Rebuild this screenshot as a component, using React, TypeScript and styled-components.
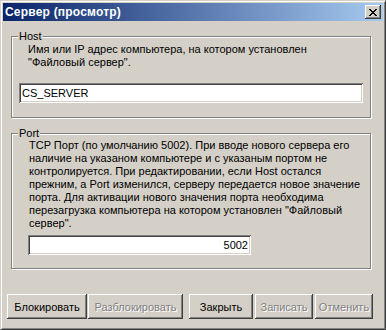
import React from "react";
import styled, { createGlobalStyle } from "styled-components";

const GlobalStyle = createGlobalStyle`
  html, body {
    margin: 0;
    padding: 0;
    background: #d4d0c8;
  }
  body {
    font-family: "Liberation Sans", Arial, sans-serif;
    font-size: 11px;
    color: #000000;
  }
`;

const Window = styled.div`
  width: 386px;
  height: 330px;
  box-sizing: border-box;
  padding: 2px;
  background: #d4d0c8;
  border: 1px solid;
  border-color: #d4d0c8 #404040 #404040 #d4d0c8;
  box-shadow: inset 1px 1px 0 #ffffff, inset -1px -1px 0 #808080;
  display: flex;
  flex-direction: column;
`;

const TitleBar = styled.div`
  height: 18px;
  display: flex;
  align-items: center;
  justify-content: space-between;
  padding: 0 2px 0 2px;
  background: linear-gradient(to right, #0a246a, #a6caf0);
`;

const Caption = styled.span`
  color: #ffffff;
  font-weight: bold;
  font-size: 12px;
  line-height: 14px;
  letter-spacing: 0.2px;
`;

const CloseButton = styled.div`
  width: 16px;
  height: 14px;
  box-sizing: border-box;
  background: #d4d0c8;
  display: flex;
  align-items: center;
  justify-content: center;
  box-shadow: inset -1px -1px 0 #404040, inset 1px 1px 0 #ffffff,
    inset -2px -2px 0 #808080, inset 2px 2px 0 #d4d0c8;
`;

const Body = styled.div`
  display: flex;
  flex-direction: column;
  padding: 15px 0 0 8px;
`;

const Group = styled.div<{ $top: number; $padTop: number; $padBottom: number }>`
  position: relative;
  width: 360px;
  box-sizing: border-box;
  margin-top: ${(p) => p.$top}px;
  padding: ${(p) => p.$padTop}px 0 ${(p) => p.$padBottom}px 0;
  border: 1px solid #808080;
  box-shadow: inset 1px 1px 0 #ffffff, 1px 1px 0 #ffffff;
  display: flex;
  flex-direction: column;
  align-items: flex-start;
`;

const Legend = styled.span`
  position: absolute;
  top: -7px;
  left: 6px;
  padding: 0 1px;
  line-height: 13px;
  background: #d4d0c8;
`;

const Note = styled.div<{ $indent: number }>`
  margin-left: ${(p) => p.$indent}px;
  line-height: 13px;
  white-space: nowrap;
`;

const Edit = styled.div<{ $indent: number; $gap: number; $width: number; $right?: boolean }>`
  margin-left: ${(p) => p.$indent}px;
  margin-top: ${(p) => p.$gap}px;
  width: ${(p) => p.$width}px;
  height: 20px;
  box-sizing: border-box;
  background: #ffffff;
  padding: 0 3px;
  display: flex;
  align-items: center;
  justify-content: ${(p) => (p.$right ? "flex-end" : "flex-start")};
  box-shadow: inset 1px 1px 0 #808080, inset -1px -1px 0 #ffffff,
    inset 2px 2px 0 #404040, inset -2px -2px 0 #d4d0c8;
`;

const ButtonRow = styled.div`
  display: flex;
  margin: 25px 0 0 4px;
`;

const Button = styled.div<{ $width: number; $gap: number; $disabled?: boolean }>`
  width: ${(p) => p.$width}px;
  height: 25px;
  margin-left: ${(p) => p.$gap}px;
  box-sizing: border-box;
  display: flex;
  align-items: center;
  justify-content: center;
  background: #d4d0c8;
  color: ${(p) => (p.$disabled ? "#808080" : "#000000")};
  text-shadow: ${(p) => (p.$disabled ? "1px 1px 0 #ffffff" : "none")};
  box-shadow: inset -1px -1px 0 #404040, inset 1px 1px 0 #ffffff,
    inset -2px -2px 0 #808080, inset 2px 2px 0 #d4d0c8;
`;

const CloseGlyph = () => (
  <svg width="8" height="7" viewBox="0 0 8 7" shapeRendering="crispEdges">
    <path
      d="M0 0h2v1h-2z M6 0h2v1h-2z M1 1h2v1h-2z M5 1h2v1h-2z M2 2h4v1h-4z M3 3h2v1h-2z M2 4h4v1h-4z M1 5h2v1h-2z M5 5h2v1h-2z M0 6h2v1h-2z M6 6h2v1h-2z"
      fill="#000000"
    />
  </svg>
);

const buttons = [
  { label: "Блокировать", width: 80, gap: 0 },
  { label: "Разблокировать", width: 95, gap: 1, disabled: true },
  { label: "Закрыть", width: 64, gap: 6 },
  { label: "Записать", width: 58, gap: 2, disabled: true },
  { label: "Отменить", width: 58, gap: 2, disabled: true },
];

const App = () => {
  return (
    <>
      <GlobalStyle />
      <Window>
        <TitleBar>
          <Caption>Сервер (просмотр)</Caption>
          <CloseButton>
            <CloseGlyph />
          </CloseButton>
        </TitleBar>
        <Body>
          <Group $top={0} $padTop={6} $padBottom={14}>
            <Legend>Host</Legend>
            <Note $indent={16}>
              Имя или IP адрес компьютера, на котором установлен
              <br />
              "Файловый сервер".
            </Note>
            <Edit $indent={7} $gap={14} $width={344}>
              CS_SERVER
            </Edit>
          </Group>
          <Group $top={15} $padTop={5} $padBottom={13}>
            <Legend>Port</Legend>
            <Note $indent={17}>
              TCP Порт (по умолчанию 5002). При вводе нового сервера его
              <br />
              наличие на указаном компьютере и с указаным портом не
              <br />
              контролируется. При редактировании, если Host остался
              <br />
              прежним, а Port изменился, серверу передается новое значение
              <br />
              порта. Для активации нового значения порта необходима
              <br />
              перезагрузка компьютера на котором установлен "Файловый
              <br />
              сервер".
            </Note>
            <Edit $indent={16} $gap={5} $width={223} $right>
              5002
            </Edit>
          </Group>
        </Body>
        <ButtonRow>
          {buttons.map((b) => (
            <Button key={b.label} $width={b.width} $gap={b.gap} $disabled={b.disabled}>
              {b.label}
            </Button>
          ))}
        </ButtonRow>
      </Window>
    </>
  );
};

export default App;
